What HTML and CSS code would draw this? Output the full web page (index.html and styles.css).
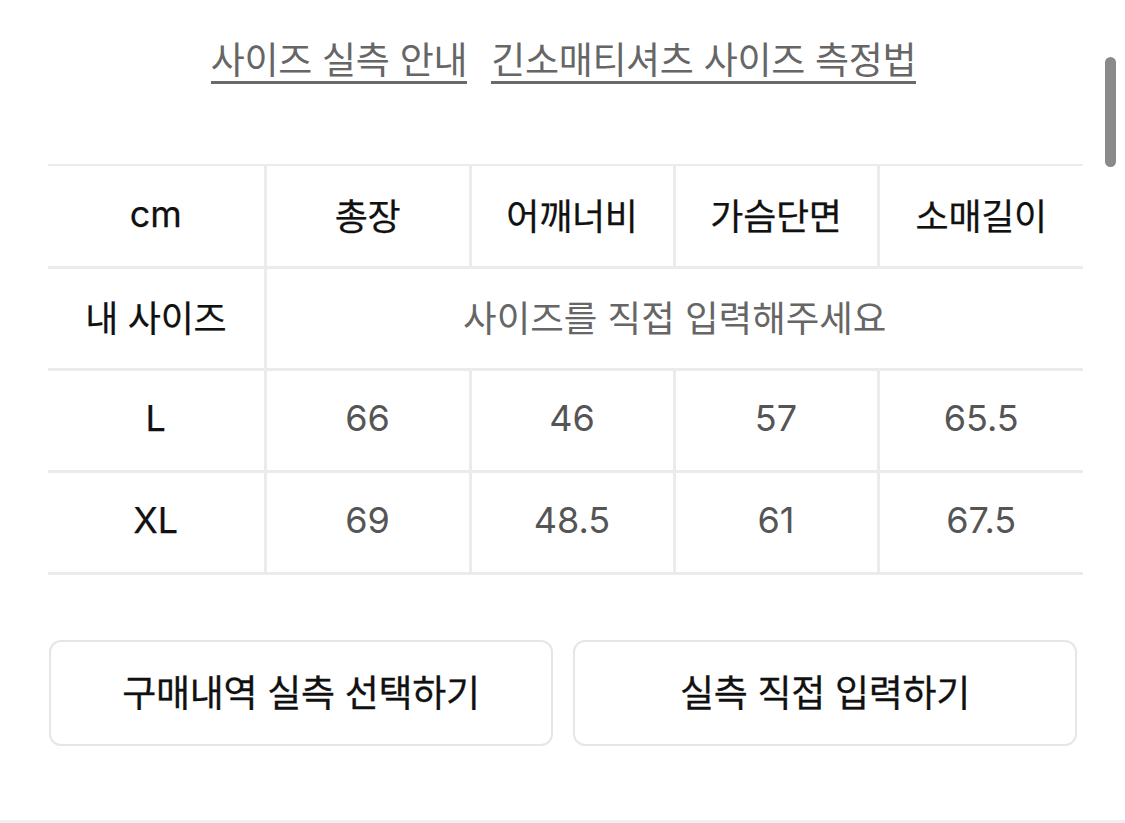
FILE: index.html
```html
<!DOCTYPE html>
<html lang="ko">
<head>
<meta charset="utf-8">
<link rel="stylesheet" href="styles.css">
</head>
<body>
<div class="page">
  <nav class="links">
    <a class="link" href="#">사이즈 실측 안내</a>
    <a class="link" href="#">긴소매티셔츠 사이즈 측정법</a>
  </nav>
  <table class="size-table">
    <colgroup>
      <col class="c0"><col class="c1"><col class="c2"><col class="c3"><col class="c4">
    </colgroup>
    <tr class="head">
      <th class="latin">cm</th><th>총장</th><th>어깨너비</th><th>가슴단면</th><th>소매길이</th>
    </tr>
    <tr>
      <th>내 사이즈</th><td colspan="4" class="placeholder">사이즈를 직접 입력해주세요</td>
    </tr>
    <tr>
      <th class="latin">L</th><td>66</td><td>46</td><td>57</td><td>65.5</td>
    </tr>
    <tr>
      <th class="latin">XL</th><td>69</td><td>48.5</td><td>61</td><td>67.5</td>
    </tr>
  </table>
  <div class="actions">
    <button class="btn">구매내역 실측 선택하기</button>
    <button class="btn">실측 직접 입력하기</button>
  </div>
</div>
<div class="scrollbar"></div>
</body>
</html>
```
FILE: styles.css
```css
html, body {
  margin: 0;
  padding: 0;
  background: #fff;
}
body {
  font-family: "Noto Sans CJK KR", "Noto Sans", sans-serif;
  height: 823px;
  overflow: hidden;
  position: relative;
  box-sizing: border-box;
  border-bottom: 3px solid #efefef;
}
.page {
  padding: 36px 42px 0 48px;
}
.links {
  display: flex;
  justify-content: center;
  gap: 24px;
  padding-right: 4px;
  height: 128px;
}
.link {
  color: #666;
  font-size: 37px;
  letter-spacing: -0.3px;
  line-height: 44px;
  height: 48px;
  text-decoration: none;
  border-bottom: 3px solid #6a6a6a;
  box-sizing: border-box;
}
.size-table {
  width: 1035px;
  border-collapse: collapse;
  table-layout: fixed;
}
.c0 { width: 217px; }
.c1 { width: 205px; }
.c2 { width: 204px; }
.c3 { width: 204px; }
.c4 { width: 205px; }
.size-table tr {
  height: 102px;
}
.size-table th,
.size-table td {
  border: 3px solid #ebebeb;
  text-align: center;
  font-size: 36px;
  padding: 0 0 4px;
}
.size-table tr:first-child th {
  border-top-width: 2px;
}
.size-table th:first-child {
  border-left: none;
}
.size-table tr > :last-child {
  border-right: none;
}
.size-table th {
  color: #111;
  font-weight: 400;
  letter-spacing: -0.3px;
  -webkit-text-stroke: 0.25px #111;
}
.size-table th.latin {
  font-family: "Inter", "Liberation Sans", sans-serif;
  letter-spacing: 0;
}
.size-table td {
  color: #555;
  font-family: "Inter", "Liberation Sans", sans-serif;
  font-weight: 400;
  letter-spacing: 0;
}
.size-table td.placeholder {
  font-family: "Noto Sans CJK KR", sans-serif;
  font-size: 36.5px;
  color: #666;
  letter-spacing: 0;
}
.actions {
  display: flex;
  gap: 20px;
  margin-top: 65px;
  width: 1028px;
  padding-left: 1px;
}
.btn {
  flex: 1;
  height: 106px;
  background: #fff;
  border: 2px solid #e6e6e6;
  border-radius: 12px;
  font-family: "Noto Sans CJK KR", sans-serif;
  font-size: 37px;
  font-weight: 400;
  color: #111;
  letter-spacing: -0.3px;
  padding: 0 0 4px;
  -webkit-text-stroke: 0.3px #111;
}
.scrollbar {
  position: absolute;
  left: 1105px;
  top: 57px;
  width: 11px;
  height: 110px;
  border-radius: 6px;
  background: #8a8a8a;
}
```
